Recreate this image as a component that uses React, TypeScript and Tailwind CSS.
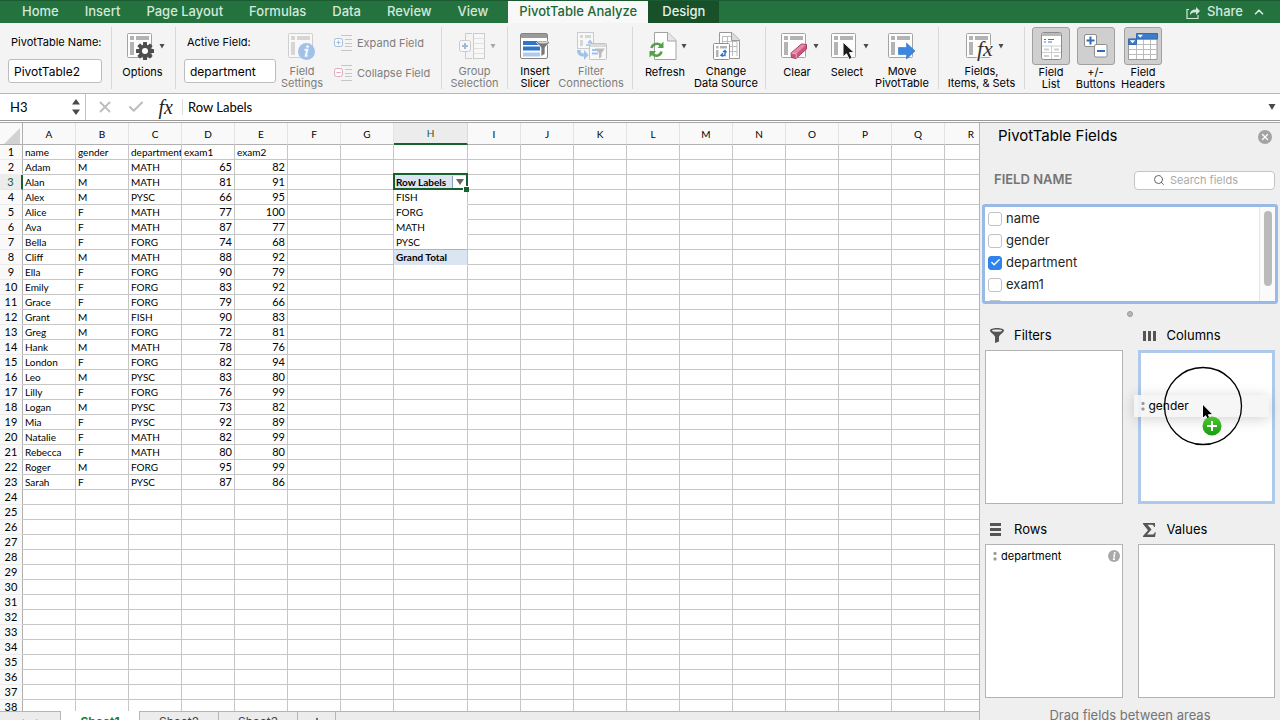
import type { ReactNode } from 'react';
import { ChevronUp, Search, Check, Plus, X } from 'lucide-react';

const tabs = ['Home', 'Insert', 'Page Layout', 'Formulas', 'Data', 'Review', 'View'];

const columns = 'ABCDEFGHIJKLMNOPQR'.split('');

const records: [string, string, string, number, number][] = [
  ['Adam', 'M', 'MATH', 65, 82],
  ['Alan', 'M', 'MATH', 81, 91],
  ['Alex', 'M', 'PYSC', 66, 95],
  ['Alice', 'F', 'MATH', 77, 100],
  ['Ava', 'F', 'MATH', 87, 77],
  ['Bella', 'F', 'FORG', 74, 68],
  ['Cliff', 'M', 'MATH', 88, 92],
  ['Ella', 'F', 'FORG', 90, 79],
  ['Emily', 'F', 'FORG', 83, 92],
  ['Grace', 'F', 'FORG', 79, 66],
  ['Grant', 'M', 'FISH', 90, 83],
  ['Greg', 'M', 'FORG', 72, 81],
  ['Hank', 'M', 'MATH', 78, 76],
  ['London', 'F', 'FORG', 82, 94],
  ['Leo', 'M', 'PYSC', 83, 80],
  ['Lilly', 'F', 'FORG', 76, 99],
  ['Logan', 'M', 'PYSC', 73, 82],
  ['Mia', 'F', 'PYSC', 92, 89],
  ['Natalie', 'F', 'MATH', 82, 99],
  ['Rebecca', 'F', 'MATH', 80, 80],
  ['Roger', 'M', 'FORG', 95, 99],
  ['Sarah', 'F', 'PYSC', 87, 86]
];

const sheet: (string | number)[][] = [['name', 'gender', 'department', 'exam1', 'exam2'], ...records];

const pivot: Record<number, string> = {
  3: 'Row Labels',
  4: 'FISH',
  5: 'FORG',
  6: 'MATH',
  7: 'PYSC',
  8: 'Grand Total'
};

const fields = ['name', 'gender', 'department', 'exam1', 'exam2'];

/* ---------- ribbon icons ---------- */

function PivotBase({ children }: { children?: ReactNode }) {
  return (
    <svg width="28" height="30" viewBox="0 0 28 30" fill="none">
      <rect x="0.5" y="2.5" width="24" height="24" rx="1" fill="#fdfdfd" stroke="#a3a3a3" />
      <rect x="3" y="5" width="4" height="4" fill="#b3b3b3" />
      <rect x="9" y="5" width="13" height="4" fill="#b3b3b3" />
      <rect x="3" y="11" width="4" height="13" fill="#b3b3b3" />
      {children}
    </svg>
  );
}

function GearIcon() {
  return (
    <PivotBase>
      <g transform="translate(18 20)">
        {[0, 45, 90, 135].map((angle) => (
          <rect key={angle} x="-2" y="-9" width="4" height="18" rx="0.6" fill="#4d4d4f" transform={`rotate(${angle})`} />
        ))}
        <circle r="6.4" fill="#4d4d4f" />
        <circle r="3" fill="#fff" />
      </g>
    </PivotBase>
  );
}

function FieldSettingsIcon() {
  return (
    <PivotBase>
      <circle cx="18.5" cy="20.5" r="8.5" fill="#3f82e0" />
      <circle cx="19.6" cy="15.6" r="1.4" fill="#fff" />
      <path d="M16.5 18.8h2.8l-1.6 6h2" stroke="#fff" strokeWidth="2" />
    </PivotBase>
  );
}

function ClearIcon() {
  return (
    <PivotBase>
      <path d="M10 22 20.5 13 25.5 13.5 25.500 18 15 27.500 10.500 26.500z" fill="#c8577d" stroke="#a83b62" strokeLinejoin="round" />
      <path d="M10.5 22 20.500 13.500 25 14 15.500 22.500z" fill="#e58aa6" />
      <path d="M10.500 22.200 15.300 22.700V27" stroke="#f3c1d0" strokeWidth="0.8" />
    </PivotBase>
  );
}

function SelectIcon() {
  return (
    <PivotBase>
      <path d="M12 11v15l3.5-3.2 2.7 5.7 3-1.4-2.7-5.5h4.7z" fill="#1b1b1b" stroke="#fff" />
    </PivotBase>
  );
}

function MoveIcon() {
  return (
    <PivotBase>
      <path d="M10.500 16.500h8V12l8.500 8-8.500 8v-4.500h-8z" fill="#3a86e0" stroke="#2f74c8" strokeWidth="0.6" />
    </PivotBase>
  );
}

function FunctionIcon() {
  return (
    <PivotBase>
      <text x="11" y="25" fontFamily="Liberation Serif, serif" fontStyle="italic" fontSize="22" fill="#333" stroke="#f7f7f7" strokeWidth="2" paintOrder="stroke">
        fx
      </text>
    </PivotBase>
  );
}

function GroupIcon() {
  return (
    <svg width="27" height="30" viewBox="0 0 27 30" fill="none" stroke="#9a9a9a">
      <path d="M13 2.500H6.500v25H13" />
      <rect x="14.500" y="2.500" width="11" height="25" fill="#fff" />
      <path d="M14.500 7.500h11M14.500 12.500h11M14.500 17.500h11M14.500 22.500h11" stroke="#c9c9c9" />
      <rect x="0.500" y="9.500" width="11" height="11" rx="2" fill="#fff" />
      <path d="M3 15h6M6 12v6" stroke="#2f74c8" strokeWidth="2" />
    </svg>
  );
}

function SlicerIcon() {
  return (
    <svg width="30" height="30" viewBox="0 0 30 30" fill="none">
      <rect x="0.500" y="2.500" width="27" height="25" rx="1.500" fill="#fff" stroke="#858585" />
      <path d="M1 3h26v4H1z" fill="#9a9a9a" />
      <path d="M3 10h17v4H3zM3 15.500h17v4H3z" fill="#2f74c8" />
      <path d="M3 21.500h17v4H3z" fill="#aecbee" />
      <path d="M16.500 11.500c0-1 3-1.500 6.500-1.500s6.500.5 6.500 1.500c0 .8-4.500 4-4.500 5.500v6l-4 2.500V17c0-1.500-4.500-4.700-4.500-5.500z" fill="#77787b" stroke="#fff" strokeWidth="0.700" />
      <ellipse cx="23" cy="11.600" rx="5" ry="0.900" fill="#d8d8d8" />
    </svg>
  );
}

function FilterConnectionsIcon() {
  return (
    <svg width="31" height="30" viewBox="0 0 31 30" fill="none">
      <rect x="1.500" y="1.500" width="16" height="16" fill="#fff" stroke="#999" />
      <path d="M4 4h3v3H4zM9 4h6v3H9zM4 9h3v6H4z" fill="#b3b3b3" />
      <path d="M10 14h4V10M12 12l2-2.500 2 2.500" stroke="#3a86e0" strokeWidth="1.300" />
      <path d="M1 19h3.500c0 2.500 1 3.500 3.500 3.500V19l4.500 5L8 29v-3.500C3.500 25.500 1 23.500 1 19z" fill="#3a86e0" />
      <rect x="13.500" y="12.500" width="17" height="16" rx="1" fill="#fff" stroke="#888" />
      <path d="M14 13h16v3H14z" fill="#bbb" />
      <path d="M16 18h7v2h-7zM16 21.500h6v2h-6z" fill="#3a86e0" />
      <path d="M19 17.500h10l-3.500 4.500v4L23 27.500V22z" fill="#77787b" />
    </svg>
  );
}

function RefreshIcon() {
  return (
    <svg width="28" height="30" viewBox="0 0 28 30" fill="none">
      <path d="M5.500 1.500h13.500l8 8v19H5.500z" fill="#fff" stroke="#a3a3a3" />
      <path d="M18.500 1.500v8.500H27" fill="#e6e6e6" stroke="#a3a3a3" />
      <path d="M2.500 17C3.500 12.500 9 11.500 12 14.500" stroke="#54a146" strokeWidth="2.600" />
      <path d="M14.500 10.500v6.500H8.500z" fill="#54a146" />
      <path d="M12.500 20.500C11.500 25 6.500 26 3.500 23" stroke="#54a146" strokeWidth="2.600" />
      <path d="M0.500 26.500V20H7z" fill="#54a146" />
    </svg>
  );
}

function ChangeSourceIcon() {
  return (
    <svg width="29" height="30" viewBox="0 0 29 30" fill="none">
      <path d="M7.500 1.500H20l7.500 7.500v18.500h-20z" fill="#fff" stroke="#999" />
      <path d="M10 5.500h9M10 10.500h15M10 15.500h15M10 20.500h15M10.500 5v18M15.500 5v18M20.500 10v15M25 10v15" stroke="#bdbdbd" />
      <path d="M19.500 1.500v8h8" fill="#dcdcdc" stroke="#999" />
      <rect x="1.500" y="12.500" width="16" height="16" rx="1" fill="#fff" stroke="#909090" />
      <path d="M4 15h2.500v2.500H4zM8 15h7v2.500H8zM4 19h2.500v7H4z" fill="#b3b3b3" />
      <path d="M9.500 24.500h3.500V20.500M11 25.500 9 24.300l2-2M11 21l2-1.500 1.500 2" stroke="#2f74c8" strokeWidth="1.400" />
    </svg>
  );
}

function FieldListIcon() {
  return (
    <svg width="21" height="28" viewBox="0 0 21 28" fill="none">
      <rect x="0.500" y="0.500" width="20" height="27" rx="2" fill="#fff" stroke="#8d8d8d" />
      <path d="M1 2.500Q1 1 2.500 1h16Q20 1 20 2.500V4H1z" fill="#b9b9b9" />
      <path d="M3 7.500h2M7 7.500h6M3 10h2M7 10h4" stroke="#3a78c4" />
      <path d="M1 14h19M1 20.500h19M10.500 14v13" stroke="#cfcfcf" />
      <path d="M3 17.500h5M13 17.500h5M3 24h5M13 24h5" stroke="#d0d0d0" strokeWidth="2" />
    </svg>
  );
}

function PlusMinusIcon() {
  return (
    <svg width="24" height="24" viewBox="0 0 24 24" fill="none">
      <rect x="0.500" y="0.500" width="12" height="12" rx="1.500" fill="#fff" stroke="#8d8d8d" />
      <rect x="10.500" y="10.500" width="12.500" height="12.500" rx="1.500" fill="#fff" stroke="#8d8d8d" />
      <path d="M2.500 6.500h8M6.500 2.500v8M13 17h8" stroke="#2f6fb8" strokeWidth="2" />
    </svg>
  );
}

function FieldHeadersIcon() {
  return (
    <svg width="30" height="27" viewBox="0 0 30 27" fill="none">
      <path d="M0.500 6h28.500v20.500H0.500z" fill="#fff" stroke="#9a9a9a" />
      <path d="M8.500 1v25M15.500 6v20M22.500 6v20M1 11.500h28M1 16.500h28M1 21.500h28" stroke="#bcbcbc" />
      <path d="M8.500 0.500H29.500v5.500h-21zM0.500 6h8v5.500h-8z" fill="#3d7cc9" stroke="#2f6bb3" />
      <path d="M9.500 1.800h5.500l-2.700 3zM1.800 7.300h5.400L4.500 10.300z" fill="#fff" />
    </svg>
  );
}

function OutlineIcon({ collapse }: { collapse?: boolean }) {
  return (
    <svg width="18" height="18" viewBox="0 0 18 18" fill="none">
      <path d="M7 1.500h11M11 5.500h7M11 9.500h7M11 12.500h7M7 16.500h11" stroke="#9a9a9a" />
      <rect x="0.500" y="4.500" width="8" height="8" rx="2" fill="#fff" stroke={collapse ? '#d0637f' : '#4f86cf'} />
      <path d={collapse ? 'M2.500 8.500h4' : 'M2.500 8.500h4M4.500 6.500v4'} stroke={collapse ? '#d0637f' : '#4f86cf'} />
    </svg>
  );
}

function CaretDown({ className }: { className?: string }) {
  return (
    <svg width="6" height="6" viewBox="0 0 6 6" className={className}>
      <path d="M0.500 1h5L3 5.500z" fill="currentColor" />
    </svg>
  );
}

/* ---------- ribbon ---------- */

type RibbonButtonProps = {
  icon: ReactNode;
  lines: string[];
  className: string;
  menu?: boolean;
  disabled?: boolean;
  pressed?: boolean;
};

function RibbonButton({ icon, lines, className, menu, disabled, pressed }: RibbonButtonProps) {
  return (
    <button
      type="button"
      disabled={disabled}
      aria-pressed={pressed}
      className={`flex shrink-0 flex-col items-center whitespace-nowrap text-[11px] leading-3 ${disabled ? 'text-[#7d7d7d]' : 'text-black'} ${className}`}
    >
      <span
        className={`mb-px flex h-[38px] items-center justify-center ${pressed ? 'w-[38px] rounded-[3px] border border-[#a0a0a0] bg-[#cfcfcf]' : ''} ${disabled ? 'opacity-45' : ''}`}
      >
        {icon}
        {menu && <CaretDown className="-mr-1.5 ml-1 text-[#4a4a4a]" />}
      </span>
      {lines.map((line) => (
        <span key={line}>{line}</span>
      ))}
    </button>
  );
}

function RibbonGroup({ className, children }: { className: string; children: ReactNode }) {
  return <div className={`flex h-[62px] shrink-0 border-r border-[#d9d9d9] ${className}`}>{children}</div>;
}

function LabeledInput({ id, label, value, className }: { id: string; label: string; value: string; className: string }) {
  return (
    <div className={`flex shrink-0 flex-col pt-[7px] ${className}`}>
      <label htmlFor={id} className="pl-[3px] text-[11px] leading-4 whitespace-nowrap">
        {label}
      </label>
      <input
        id={id}
        defaultValue={value}
        className="mt-[9px] h-6 w-full rounded-[3px] border border-[#bdbdbd] bg-white px-[5px] text-[12px] outline-none"
      />
    </div>
  );
}

function Ribbon() {
  return (
    <div className="flex h-[71px] shrink-0 border-b border-[#b5b5b5] bg-[#f4f4f4] pt-1">
      <RibbonGroup className="w-28 pl-2">
        <LabeledInput id="pivot-name" label="PivotTable Name:" value="PivotTable2" className="w-[94px]" />
      </RibbonGroup>
      <RibbonGroup className="w-16 justify-center pr-[2px]">
        <RibbonButton icon={<GearIcon />} lines={['Options']} menu className="w-14" />
      </RibbonGroup>
      <RibbonGroup className="w-[266px] pl-2">
        <LabeledInput id="active-field" label="Active Field:" value="department" className="w-[92px]" />
        <RibbonButton icon={<FieldSettingsIcon />} lines={['Field', 'Settings']} disabled className="w-[52px]" />
        <div className="flex flex-col gap-3 pt-[7px] pl-[6px] text-[11px] text-[#7d7d7d]">
          <button type="button" disabled className="flex h-[18px] items-center gap-[5px] whitespace-nowrap">
            <span className="opacity-50">
              <OutlineIcon />
            </span>
            Expand Field
          </button>
          <button type="button" disabled className="flex h-[18px] items-center gap-[5px] whitespace-nowrap">
            <span className="opacity-50">
              <OutlineIcon collapse />
            </span>
            Collapse Field
          </button>
        </div>
      </RibbonGroup>
      <RibbonGroup className="w-[66px] justify-center">
        <RibbonButton icon={<GroupIcon />} lines={['Group', 'Selection']} menu disabled className="w-[60px]" />
      </RibbonGroup>
      <RibbonGroup className="w-[125px] justify-center">
        <RibbonButton icon={<SlicerIcon />} lines={['Insert', 'Slicer']} className="w-[42px]" />
        <RibbonButton icon={<FilterConnectionsIcon />} lines={['Filter', 'Connections']} disabled className="w-[70px]" />
      </RibbonGroup>
      <RibbonGroup className="w-[133px] justify-center">
        <RibbonButton icon={<RefreshIcon />} lines={['Refresh']} menu className="w-[54px]" />
        <RibbonButton icon={<ChangeSourceIcon />} lines={['Change', 'Data Source']} className="w-[68px]" />
      </RibbonGroup>
      <RibbonGroup className="w-[173px] justify-center">
        <RibbonButton icon={<ClearIcon />} lines={['Clear']} menu className="w-[50px]" />
        <RibbonButton icon={<SelectIcon />} lines={['Select']} menu className="w-[50px]" />
        <RibbonButton icon={<MoveIcon />} lines={['Move', 'PivotTable']} className="w-[60px]" />
      </RibbonGroup>
      <RibbonGroup className="w-[86px] justify-center">
        <RibbonButton icon={<FunctionIcon />} lines={['Fields,', 'Items, & Sets']} menu className="w-20" />
      </RibbonGroup>
      <div className="flex pl-1">
        <RibbonButton icon={<FieldListIcon />} lines={['Field', 'List']} pressed className="w-11" />
        <RibbonButton icon={<PlusMinusIcon />} lines={['+/-', 'Buttons']} pressed className="w-[45px]" />
        <RibbonButton icon={<FieldHeadersIcon />} lines={['Field', 'Headers']} pressed className="w-[50px]" />
      </div>
    </div>
  );
}

function TabBar() {
  return (
    <nav className="flex h-[23px] shrink-0 items-stretch border-t border-[#1a5a30] bg-[#24733f] pl-[9px] text-[13px] font-medium text-[#d3e8d9]">
      {tabs.map((tab) => (
        <button key={tab} type="button" className="px-[13px] whitespace-nowrap">
          {tab}
        </button>
      ))}
      <button type="button" className="ml-[7px] bg-[#f8f8f8] px-[11px] whitespace-nowrap text-[#1c6a37]">
        PivotTable Analyze
      </button>
      <button type="button" className="bg-[#185029] px-[14px] text-[#e6f2e9]">
        Design
      </button>
      <button type="button" className="ml-auto flex items-center gap-[6px]">
        <svg width="15" height="13" viewBox="0 0 15 13" fill="none" stroke="currentColor" strokeWidth="1.200">
          <path d="M3 3.500H1v9h11V9" />
          <path d="M4 9c0-4 2-5.500 6-5.500V1l4 4-4 4V6.300C7 6.300 5.500 7 4 9z" fill="currentColor" stroke="none" />
        </svg>
        Share
      </button>
      <button type="button" aria-label="Collapse ribbon" className="mr-[14px] ml-[9px]">
        <ChevronUp size={14} strokeWidth={3} />
      </button>
    </nav>
  );
}

function FormulaBar() {
  return (
    <div className="flex h-[27px] shrink-0 items-center border-b border-[#999] bg-white font-['Lato',sans-serif]">
      <div className="flex h-full w-[86px] items-center border-r border-[#c4c4c4] pr-1">
        <input aria-label="Name box" defaultValue="H3" className="min-w-0 flex-1 pt-px pl-[10px] text-[13px] outline-none" />
        <svg width="10" height="18" viewBox="0 0 10 18" fill="#4a4a4a">
          <path d="M1 6.500 5 1l4 5.500zM1 11.500h8L5 17z" />
        </svg>
      </div>
      <div className="flex w-24 items-center justify-between pr-[9px] pl-[10px]">
        <X size={18} strokeWidth={2.4} color="#bdbdbd" />
        <Check size={18} strokeWidth={2.8} color="#bdbdbd" />
        <span className="font-['Liberation_Serif',serif] text-[20px] leading-5 text-[#222] italic">fx</span>
      </div>
      <input
        aria-label="Formula"
        defaultValue="Row Labels"
        className="h-4 min-w-0 flex-1 border-l border-[#ddd] pt-px pl-[5px] text-[13px] outline-none"
      />
      <svg width="8" height="8" viewBox="0 0 8 8" className="mr-1" fill="#4a4a4a">
        <path d="M0.500 1h7L4 7z" />
      </svg>
    </div>
  );
}

/* ---------- sheet ---------- */

function PivotCell({ row }: { row: number }) {
  if (row === 3) {
    return (
      <td className="relative border-r border-b border-[#c6c6c6] bg-[#dbe5f1] p-0 font-bold">
        <div className="flex h-[14px] items-center justify-between pl-[2px]">
          Row Labels
          <button
            type="button"
            aria-label="Filter row labels"
            className="flex h-3 w-[15px] items-center justify-center border-l border-[#8aa0c0] bg-white"
          >
            <svg width="8" height="6" viewBox="0 0 8 6">
              <path d="M0 0h8L4 6z" fill="#666" />
            </svg>
          </button>
        </div>
        <span className="pointer-events-none absolute -inset-x-px -top-[2px] -bottom-px border-2 border-[#17602f]" />
        <span className="absolute -right-[2px] -bottom-[3px] size-[6px] border-t border-l border-white bg-[#17602f]" />
      </td>
    );
  }
  if (row === 8) {
    return <td className="border-r border-b border-r-[#c6c6c6] border-b-[#dbe5f1] bg-[#dbe5f1] p-0 pl-[2px] font-bold">{pivot[row]}</td>;
  }
  return (
    <td className={`border-r border-b border-r-[#c6c6c6] bg-white p-0 pl-[2px] ${row === 7 ? 'border-b-[#9db7d8]' : 'border-b-white'}`}>
      {pivot[row]}
    </td>
  );
}

function Sheet() {
  return (
    <div className="min-w-0 flex-1 overflow-hidden bg-white font-['Lato',sans-serif]">
      <table className="w-[998px] table-fixed border-separate border-spacing-0 text-[10px] leading-[14px] text-black">
        <colgroup>
          <col className="w-[23px]" />
          {columns.map((column) => (
            <col key={column} className={column === 'H' ? 'w-[74px]' : 'w-[53px]'} />
          ))}
        </colgroup>
        <thead>
          <tr className="h-[22px]">
            <th className="border-r border-b border-[#b0b0b0] bg-[#f9f9f9] p-0">
              <svg width="16" height="16" viewBox="0 0 16 16" className="mt-1 ml-1">
                <path d="M16 0v16H0z" fill="#d2d2d2" />
              </svg>
            </th>
            {columns.map((column) => (
              <th
                key={column}
                className={
                  column === 'H'
                    ? 'border-r border-b-2 border-r-[#d9d9d9] border-b-[#17602f] bg-[#ececec] p-0 font-normal text-[#17602f]'
                    : 'border-r border-b border-r-[#e3e3e3] border-b-[#b0b0b0] bg-[#f9f9f9] p-0 font-normal'
                }
              >
                {column}
              </th>
            ))}
          </tr>
        </thead>
        <tbody>
          {Array.from({ length: 38 }, (_, i) => i + 1).map((row) => (
            <tr key={row} className="h-[15px]">
              <th
                className={
                  row === 3
                    ? 'border-r-2 border-b border-r-[#17602f] border-b-[#e6e6e6] bg-[#ececec] p-0 text-[11px] font-normal text-[#17602f]'
                    : 'border-r border-b border-r-[#b0b0b0] border-b-[#ececec] bg-[#f9f9f9] p-0 text-[11px] font-normal'
                }
              >
                {row}
              </th>
              {columns.map((column, index) => {
                if (column === 'H' && pivot[row]) {
                  return <PivotCell key={column} row={row} />;
                }
                const value = sheet[row - 1]?.[index];
                return (
                  <td
                    key={column}
                    className={`overflow-hidden border-r border-b border-[#c6c6c6] p-0 whitespace-nowrap ${typeof value === 'number' ? 'pr-[2px] text-right text-[11px]' : 'pl-[2px]'}`}
                  >
                    {value}
                  </td>
                );
              })}
            </tr>
          ))}
        </tbody>
      </table>
    </div>
  );
}

function SheetTabs() {
  return (
    <div className="flex h-[21px] shrink-0 border-t border-[#b5b5b5] bg-[#ececec] text-[12px] text-[#444]">
      <div className="flex w-[61px] items-center justify-center gap-3 border-r border-[#b5b5b5]">
        <svg width="6" height="6" viewBox="0 0 6 6" fill="#a8a8a8">
          <path d="M6 0v6L0 3z" />
        </svg>
        <svg width="6" height="6" viewBox="0 0 6 6" fill="#a8a8a8">
          <path d="M0 0v6l6-3z" />
        </svg>
      </div>
      <button type="button" className="-mt-px w-[78px] bg-white font-bold text-[#1c7a43]">
        Sheet1
      </button>
      <button type="button" className="w-20 border-x border-[#b5b5b5]">
        Sheet2
      </button>
      <button type="button" className="w-[79px] border-r border-[#b5b5b5]">
        Sheet3
      </button>
      <button type="button" aria-label="Add sheet" className="flex w-[38px] items-center justify-center border-r border-[#b5b5b5]">
        <Plus size={12} strokeWidth={3} />
      </button>
    </div>
  );
}

/* ---------- field pane ---------- */

function Grip() {
  return (
    <svg width="4" height="9" viewBox="0 0 4 9" fill="#999">
      <rect x="0.500" width="3" height="3" rx="1" />
      <rect x="0.500" y="5.500" width="3" height="3" rx="1" />
    </svg>
  );
}

function FunnelIcon() {
  return (
    <svg width="14" height="15" viewBox="0 0 14 15">
      <path d="M0 2.500C0 1 3 0 7 0s7 1 7 2.500C14 4.500 9 7 9 9v4.500L5 15V9C5 7 0 4.500 0 2.500z" fill="#555" />
      <ellipse cx="7" cy="2.600" rx="5" ry="1.200" fill="#efefef" />
    </svg>
  );
}

function ColumnsIcon() {
  return (
    <svg width="14" height="12" viewBox="0 0 14 12" fill="#555">
      <path d="M0 1h3v10H0zM5 1h3v10H5zM10 1h3v10h-3z" />
    </svg>
  );
}

function RowsIcon() {
  return (
    <svg width="12" height="14" viewBox="0 0 12 14" fill="#555">
      <path d="M0 0h11v3H0zM0 5h11v3H0zM0 10h11v3H0z" />
    </svg>
  );
}

function SigmaIcon() {
  return (
    <svg width="13" height="14" viewBox="0 0 13 14">
      <path d="M0 0h12v4h-1C10.500 2.200 10 1.800 8 1.800H4.500L8.500 6.500 4 11.500H9c1.500 0 2.200-.8 2.800-2.300h1L12 14H0v-1l5-5.700L0 1z" fill="#555" />
    </svg>
  );
}

function DragGhost() {
  return (
    <div className="absolute top-[42px] right-[3px] -left-[7px] flex h-[22px] items-center gap-1 bg-[#f5f5f5]/90 pl-[7px] text-[12px] shadow-[0_2px_14px_rgba(0,0,0,0.18)]">
      <Grip />
      gender
    </div>
  );
}

function DragCursor() {
  return (
    <svg width="80" height="80" viewBox="0 0 80 80" fill="none" className="absolute top-[13px] left-[22px]">
      <defs>
        <linearGradient id="badge" x1="0" y1="0" x2="0" y2="1">
          <stop offset="0" stopColor="#4cc62f" />
          <stop offset="1" stopColor="#199c10" />
        </linearGradient>
      </defs>
      <circle cx="40" cy="40" r="38.500" stroke="#000" strokeWidth="1.300" />
      <path d="M39.500 38v14.500l3.200-2.800 2.300 5 2.600-1.200-2.200-4.800h4.600z" fill="#000" stroke="#fff" />
      <circle cx="49" cy="60" r="9.500" fill="url(#badge)" />
      <path d="M44 60h10M49 55v10" stroke="#fff" strokeWidth="2" />
    </svg>
  );
}

function DropZone({ title, icon, active, children }: { title: string; icon: ReactNode; active?: boolean; children?: ReactNode }) {
  return (
    <section className="min-w-0 flex-1">
      <h3 className="flex h-[29px] items-center text-[13px]">
        <span className="flex w-[29px] pl-[5px]">{icon}</span>
        {title}
      </h3>
      <div className={`relative h-[154px] bg-white ${active ? 'border-[3px] border-[#adc9ec]' : 'border border-[#b3b3b3]'}`}>{children}</div>
    </section>
  );
}

function FieldPane() {
  return (
    <aside className="flex w-[301px] shrink-0 flex-col border-l border-[#b5b5b5] bg-[#efefef]">
      <div className="flex h-[27px] items-center justify-between pr-2 pl-[18px]">
        <h2 className="text-[15px]">PivotTable Fields</h2>
        <button type="button" aria-label="Close" className="flex size-[14px] items-center justify-center rounded-full bg-[#a3a3a3]">
          <X size={10} strokeWidth={3} color="#fff" />
        </button>
      </div>
      <div className="mt-5 flex h-5 items-center justify-between pr-[5px] pl-[14px]">
        <label htmlFor="search-fields" className="text-[13px] font-semibold text-[#747474]">
          FIELD NAME
        </label>
        <div className="flex h-[19px] w-[141px] items-center gap-[5px] rounded-[4px] border border-[#c4c4c4] bg-white pl-[18px]">
          <Search size={12} strokeWidth={1.8} color="#555" className="shrink-0" />
          <input id="search-fields" placeholder="Search fields" className="min-w-0 flex-1 text-[11px] outline-none placeholder:text-[#aaa]" />
        </div>
      </div>
      <div className="mx-[2px] mt-[14px] flex h-[100px] rounded-[3px] border-[3px] border-[#9abae6] bg-white">
        <ul className="min-w-0 flex-1 overflow-hidden">
          {fields.map((field) => (
            <li key={field}>
              <label className="flex h-[22px] items-center gap-1 pt-px pl-[3px] text-[13px] text-[#262626]">
                <input type="checkbox" defaultChecked={field === 'department'} className="peer sr-only" />
                <span className="flex size-[14px] items-center justify-center rounded-[3px] border border-[#c2c2c2] bg-white text-transparent peer-checked:border-[#2f83ee] peer-checked:bg-[#2f83ee] peer-checked:text-white">
                  <Check size={11} strokeWidth={3} className="shrink-0" />
                </span>
                {field}
              </label>
            </li>
          ))}
        </ul>
        <div className="flex w-4 justify-center border-l border-[#e6e6e6] bg-[#fafafa] pt-1">
          <div className="h-[75px] w-2 rounded-full bg-[#bababa]" />
        </div>
      </div>
      <div className="mx-auto mt-[7px] size-[6px] shrink-0 rounded-full border border-[#999] bg-[#b8b8b8]" />
      <div className="mt-1 flex gap-[15px] px-[5px]">
        <DropZone title="Filters" icon={<FunnelIcon />} />
        <DropZone title="Columns" icon={<ColumnsIcon />} active>
          <DragGhost />
          <DragCursor />
        </DropZone>
      </div>
      <div className="mt-[11px] flex gap-[15px] px-[5px]">
        <DropZone title="Rows" icon={<RowsIcon />}>
          <div className="flex h-[22px] items-center gap-1 pr-[2px] pl-[7px] text-[11px]">
            <Grip />
            department
            <svg width="12" height="12" viewBox="0 0 12 12" className="ml-auto">
              <circle cx="6" cy="6" r="6" fill="#a9a9a9" />
              <circle cx="6.700" cy="2.900" r="1" fill="#fff" />
              <path d="M5 5h1.600L5.600 9.300H7" stroke="#fff" strokeWidth="1.200" fill="none" />
            </svg>
          </div>
        </DropZone>
        <DropZone title="Values" icon={<SigmaIcon />} />
      </div>
      <p className="mt-[7px] text-center text-[13px] leading-5 text-[#747474]">Drag fields between areas</p>
    </aside>
  );
}

export default function App() {
  return (
    <div className="h-screen overflow-hidden font-['Inter',sans-serif] text-black">
      <div className="flex h-[calc(100vh+12px)] flex-col">
        <TabBar />
        <Ribbon />
        <FormulaBar />
        <div className="mt-px flex min-h-0 flex-1 border-t border-[#a8a8a8]">
          <main className="flex min-w-0 flex-1 flex-col">
            <Sheet />
            <SheetTabs />
          </main>
          <FieldPane />
        </div>
      </div>
    </div>
  );
}
